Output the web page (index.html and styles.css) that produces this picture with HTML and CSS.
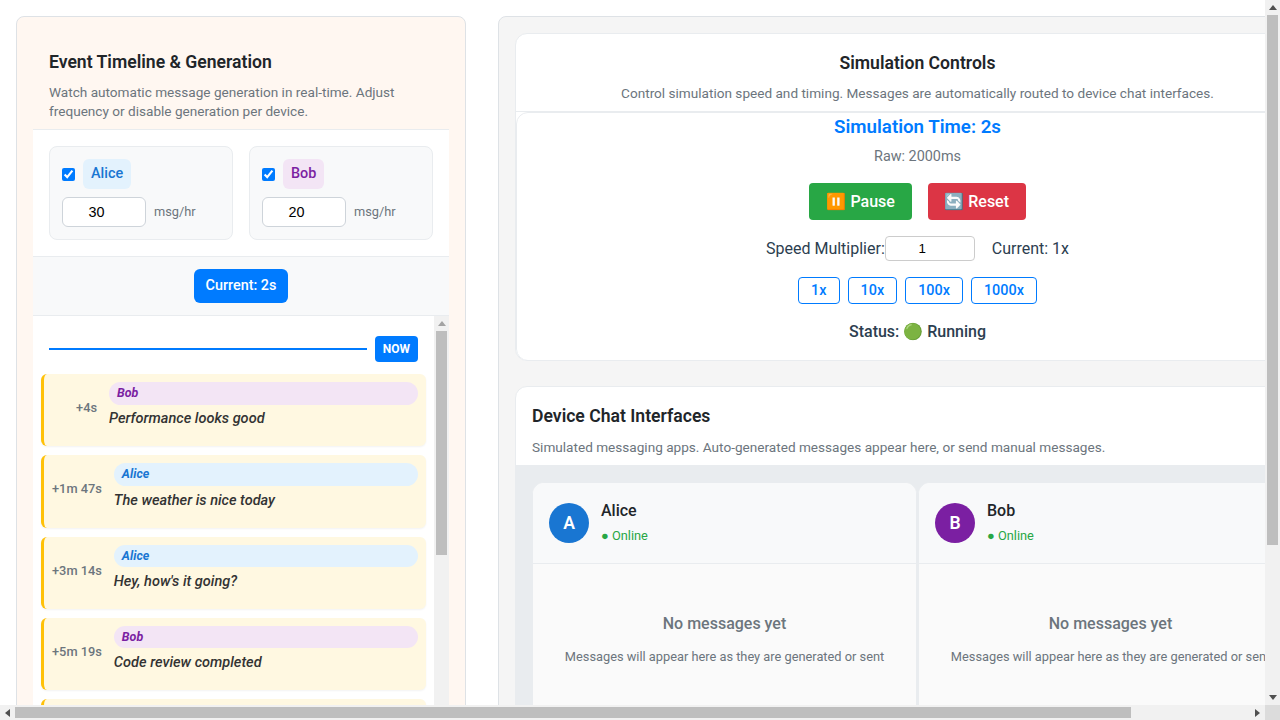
FILE: index.html
```html
<!DOCTYPE html>
<html lang="en">
<head>
<meta charset="utf-8">
<title>Simulation</title>
<link rel="stylesheet" href="styles.css">
</head>
<body>
<div class="shell">
<div class="viewport">
<main class="layout">
  <section class="panel panel-left">
    <header class="left-head">
      <h2 class="title">Event Timeline &amp; Generation</h2>
      <p class="sub">Watch automatic message generation in real-time. Adjust frequency or disable generation per device.</p>
    </header>
    <div class="gen-grid">
      <div class="gen-card">
        <div class="gen-top"><input class="check" type="checkbox" checked><span class="badge alice">Alice</span></div>
        <div class="gen-rate"><input class="rate" type="number" value="30"><span class="unit">msg/hr</span></div>
      </div>
      <div class="gen-card">
        <div class="gen-top"><input class="check" type="checkbox" checked><span class="badge bob">Bob</span></div>
        <div class="gen-rate"><input class="rate" type="number" value="20"><span class="unit">msg/hr</span></div>
      </div>
    </div>
    <div class="current-bar"><span class="current-pill">Current: 2s</span></div>
    <div class="timeline">
      <div class="timeline-track">
        <div class="now-row"><span class="now-line"></span><span class="now-tag">NOW</span></div>
        <div class="event"><span class="event-time">+4s</span><div class="event-body"><div class="pill bob">Bob</div><div class="msg">Performance looks good</div></div></div>
        <div class="event"><span class="event-time">+1m 47s</span><div class="event-body"><div class="pill alice">Alice</div><div class="msg">The weather is nice today</div></div></div>
        <div class="event"><span class="event-time">+3m 14s</span><div class="event-body"><div class="pill alice">Alice</div><div class="msg">Hey, how's it going?</div></div></div>
        <div class="event"><span class="event-time">+5m 19s</span><div class="event-body"><div class="pill bob">Bob</div><div class="msg">Code review completed</div></div></div>
        <div class="event"></div>
      </div>
      <div class="vbar vbar-inner">
        <span class="arrow arrow-up arrow-dim"></span>
        <span class="thumb thumb-inner"></span>
      </div>
    </div>
  </section>

  <section class="panel panel-right">
    <div class="card card-sim">
      <header class="card-head centered">
        <h2 class="title">Simulation Controls</h2>
        <p class="sub">Control simulation speed and timing. Messages are automatically routed to device chat interfaces.</p>
      </header>
      <div class="sim-body">
        <div class="sim-time">Simulation Time: 2s</div>
        <div class="sim-raw">Raw: 2000ms</div>
        <div class="sim-actions">
          <button class="btn btn-green">⏸️ Pause</button>
          <button class="btn btn-red">🔄 Reset</button>
        </div>
        <div class="speed-row">
          <label class="speed-label">Speed Multiplier:</label>
          <input class="speed-input" type="number" value="1">
          <span class="speed-current">Current: 1x</span>
        </div>
        <div class="presets">
          <button class="preset">1x</button>
          <button class="preset">10x</button>
          <button class="preset">100x</button>
          <button class="preset">1000x</button>
        </div>
        <div class="status">Status: 🟢 Running</div>
      </div>
    </div>

    <div class="card">
      <header class="card-head device-head">
        <h2 class="title">Device Chat Interfaces</h2>
        <p class="sub">Simulated messaging apps. Auto-generated messages appear here, or send manual messages.</p>
      </header>
      <div class="chat-grid">
        <article class="chat">
          <div class="chat-head">
            <span class="avatar avatar-a">A</span>
            <div><div class="chat-name">Alice</div><div class="chat-online">● Online</div></div>
          </div>
          <div class="chat-body">
            <div class="empty-title">No messages yet</div>
            <div class="empty-sub">Messages will appear here as they are generated or sent</div>
          </div>
        </article>
        <article class="chat">
          <div class="chat-head">
            <span class="avatar avatar-b">B</span>
            <div><div class="chat-name">Bob</div><div class="chat-online">● Online</div></div>
          </div>
          <div class="chat-body">
            <div class="empty-title">No messages yet</div>
            <div class="empty-sub">Messages will appear here as they are generated or sent</div>
          </div>
        </article>
      </div>
    </div>
  </section>
</main>
</div>
<div class="vbar vbar-page">
  <span class="arrow arrow-up"></span>
  <span class="thumb thumb-page-v"></span>
  <span class="bar-rest"></span>
  <span class="arrow arrow-down"></span>
</div>
<div class="hbar">
  <span class="arrow arrow-left"></span>
  <span class="thumb thumb-page-h"></span>
  <span class="bar-rest"></span>
  <span class="arrow arrow-right"></span>
</div>
<div class="corner"></div>
</div>
</body>
</html>
```
FILE: styles.css
```css
* { box-sizing: border-box; }
html, body { margin: 0; height: 100%; }
body {
  background: #fff;
  color: #212529;
  font-family: Roboto, "Noto Color Emoji", sans-serif;
}
.shell {
  display: grid;
  grid-template-columns: 1fr 15px;
  grid-template-rows: 1fr 15px;
  height: 100%;
  overflow: hidden;
}
.viewport { overflow: hidden; min-width: 0; min-height: 0; }
.layout {
  display: grid;
  grid-template-columns: 450px 838px;
  gap: 32px;
  width: 1400px;
  padding: 16px;
}

/* drawn scrollbars */
.vbar, .hbar { display: flex; background: #f1f1f1; }
.vbar { flex-direction: column; align-items: center; }
.hbar { align-items: center; }
.bar-rest { flex: 1; }
.arrow { flex: none; position: relative; width: 15px; height: 15px; }
.arrow::after { content: ""; position: absolute; left: 3.5px; top: 4px; border: 4px solid transparent; }
.arrow-up::after { top: 5px; border-top-width: 0; border-bottom: 5px solid #505050; }
.arrow-down::after { top: 5px; border-bottom-width: 0; border-top: 5px solid #505050; }
.arrow-left::after { left: 5px; top: 3.5px; border-left-width: 0; border-right: 5px solid #505050; }
.arrow-right::after { left: 5px; top: 3.5px; border-right-width: 0; border-left: 5px solid #505050; }
.arrow-dim::after { border-bottom-color: #a3a3a3; }
.thumb { flex: none; display: block; background: #bebebe; }
.thumb-page-v { width: 11px; height: 530px; }
.thumb-page-h { width: 1116px; height: 11px; }
.thumb-inner { width: 11px; height: 224px; }
.corner { background: #dcdcdc; }

.panel {
  border: 1px solid #dee2e6;
  border-radius: 8px;
  padding: 16px;
}
.panel-left {
  display: flex;
  flex-direction: column;
  height: 867px;
  background: #fff7f1;
}
.panel-right { background: #f5f5f5; }

.title { margin: 0; font-size: 17.6px; line-height: 26px; font-weight: 600; color: #212529; }
.sub { margin: 0; font-size: 13.6px; line-height: 19px; color: #6c757d; }

.left-head { padding: 16px 16px 8px; border-bottom: 1px solid #e9ecef; }
.left-head .sub { margin-top: 8px; }

.gen-grid {
  display: grid;
  grid-template-columns: 1fr 1fr;
  gap: 16px;
  padding: 16px;
  background: #fff;
}
.gen-card {
  padding: 12px;
  background: #f8f9fa;
  border: 1px solid #e9ecef;
  border-radius: 8px;
}
.gen-top { display: flex; align-items: center; gap: 8px; }
.check { width: 13px; height: 13px; margin: 0; accent-color: #007bff; }
.badge {
  padding: 4px 8px;
  border-radius: 6px;
  font-size: 14.4px;
  line-height: 22px;
  font-weight: 500;
}
.alice { background: #e3f2fd; color: #1976d2; }
.bob { background: #f3e5f5; color: #7b1fa2; }
.gen-rate { display: flex; align-items: center; gap: 8px; margin-top: 8px; }
.rate {
  width: 84px;
  height: 30px;
  border: 1px solid #ced4da;
  border-radius: 6px;
  background: #fff;
  font-size: 14.4px;
  text-align: center;
}
.unit { font-size: 12.8px; line-height: 15px; padding-bottom: 1px; color: #6c757d; }

.current-bar {
  display: flex;
  justify-content: center;
  padding: 12px;
  background: #f8f9fa;
  border-top: 1px solid #e9ecef;
  border-bottom: 1px solid #e9ecef;
}
.current-pill {
  padding: 8px 12px;
  border-radius: 6px;
  background: #007bff;
  color: #fff;
  font-size: 14.4px;
  line-height: 18px;
  font-weight: 500;
}

.timeline { display: flex; flex: 1; min-height: 0; overflow: hidden; background: #fff; }
.timeline-track {
  display: flex;
  flex: 1;
  flex-direction: column;
  gap: 9px;
  min-width: 0;
  padding: 20px 8px 8px;
}
.now-row { display: flex; align-items: center; gap: 8px; margin: 0 8px 3px; }
.now-line { flex: 1; height: 2px; background: #007bff; }
.now-tag {
  padding: 6px 8px;
  border-radius: 4px;
  background: #007bff;
  color: #fff;
  font-size: 12px;
  line-height: 14px;
  font-weight: 700;
}
.event {
  display: flex;
  flex: none;
  align-items: center;
  gap: 12px;
  height: 72.25px;
  padding: 8px 8px 13px;
  background: #fff8e1;
  border-left: 3px solid #ffc107;
  border-radius: 6px;
  box-shadow: 0 1px 2px rgba(0, 0, 0, .05);
}
.event-time {
  min-width: 45px;
  flex-shrink: 0;
  text-align: right;
  font-size: 12.8px;
  font-weight: 500;
  color: #6c757d;
}
.event-body { flex: 1; min-width: 0; align-self: flex-start; }
.pill {
  padding: 4px 8px;
  border-radius: 12px;
  font-size: 12.48px;
  line-height: 14.5px;
  font-weight: 700;
  font-style: italic;
}
.msg {
  margin-top: 3.75px;
  font-size: 14.56px;
  line-height: 21px;
  font-weight: 500;
  font-style: italic;
  color: #333;
}

.card {
  background: #fff;
  border: 1px solid #e9ecef;
  border-radius: 12px;
  overflow: hidden;
}
.card-sim { margin-bottom: 25px; }
.card-head { padding: 16px 16px 8px; }
.card-head .sub { margin-top: 8px; }
.centered { padding-left: 17px; text-align: center; border-bottom: 1px solid #e9ecef; }
.device-head { padding-bottom: 8px; }
.device-head .sub { margin-top: 9px; }

.sim-body {
  display: flex;
  flex-direction: column;
  align-items: center;
  padding: 3px 16px 17px;
  background: #fff;
  border: 1px solid #e9ecef;
  border-radius: 12px;
  margin-right: -1px;
  margin-bottom: -1px;
  color: #2c3e50;
}
.sim-time { font-size: 18.72px; line-height: 22px; font-weight: 600; color: #007bff; }
.sim-raw { margin-top: 8px; font-size: 14.4px; line-height: 21px; color: #6c757d; }
.sim-actions { display: flex; gap: 16px; margin-top: 16px; }
.btn {
  height: 37px;
  padding: 0 17px;
  border: 0;
  border-radius: 4px;
  color: #fff;
  font-family: inherit;
  font-size: 16px;
  font-weight: 500;
}
.btn-green { background: #28a745; }
.btn-red { background: #dc3545; padding: 0 16.5px; }
.speed-row { display: flex; align-items: center; margin-top: 16px; font-size: 16px; }
.speed-input {
  width: 90px;
  height: 25px;
  border: 1px solid #ccc;
  border-radius: 4px;
  background: #fff;
  font-size: 13.33px;
  text-align: center;
}
.speed-current { margin-left: 17px; }
.presets { display: flex; gap: 8px; margin-top: 16px; }
.preset {
  height: 27px;
  padding: 0 12px;
  background: #fff;
  border: 1px solid #007bff;
  border-radius: 4px;
  color: #007bff;
  font-family: inherit;
  font-size: 14.4px;
  font-weight: 500;
}
.status { margin-top: 17px; font-size: 16px; line-height: 22px; font-weight: 500; }

.chat-grid {
  display: grid;
  grid-template-columns: 385px 385px;
  gap: 1px;
  padding: 17px 16px 16px;
  background: #e9ecef;
}
.chat {
  display: flex;
  flex-direction: column;
  min-height: 367px;
  background: #fafafa;
  border: 1px solid #e9ecef;
  border-radius: 12px;
  overflow: hidden;
}
.chat-head {
  display: flex;
  align-items: center;
  gap: 12px;
  height: 81px;
  padding: 0 16px;
  background: #f8f9fa;
  border-bottom: 1px solid #e9ecef;
}
.avatar {
  display: flex;
  align-items: center;
  justify-content: center;
  width: 40px;
  height: 40px;
  padding-bottom: 1px;
  border-radius: 50%;
  color: #fff;
  font-size: 17.6px;
  font-weight: 600;
}
.avatar-a { background: #1976d2; }
.avatar-b { background: #7b1fa2; }
.chat-name { font-size: 16px; line-height: 20px; font-weight: 500; color: #212529; }
.chat-online { margin-top: 6px; font-size: 12.8px; line-height: 18px; color: #28a745; }
.chat-body { flex: 1; padding: 48px 16px 16px; text-align: center; color: #6c757d; }
.empty-title { font-size: 16px; line-height: 24px; font-weight: 500; }
.empty-sub { margin-top: 11px; font-size: 12.8px; line-height: 19px; white-space: nowrap; }
```
